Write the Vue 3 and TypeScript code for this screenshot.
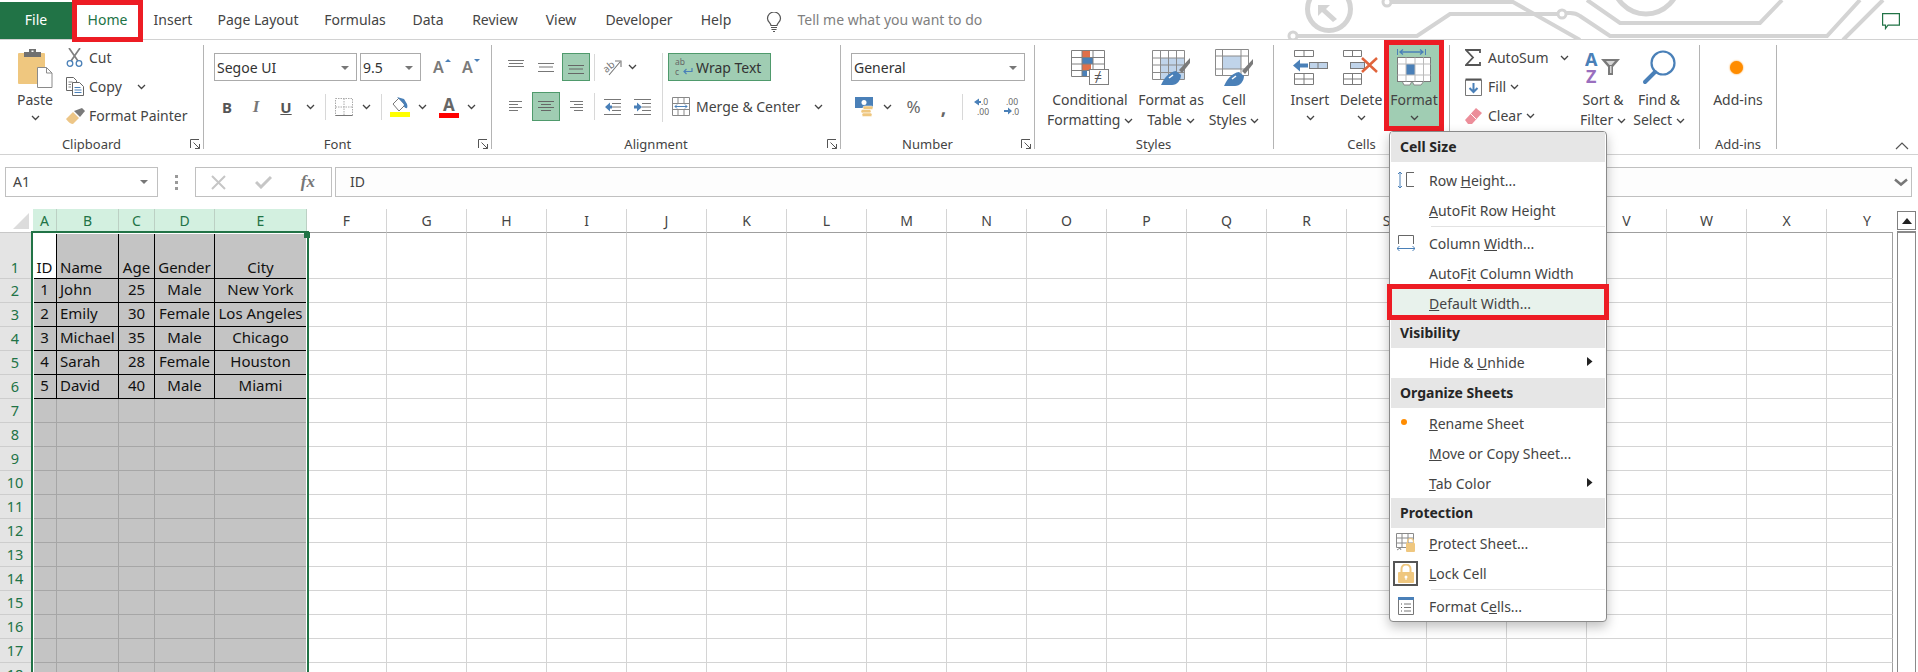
<script setup lang="ts">
const tabs = [
  { name: 'File', w: 72, cls: 'file' },
  { name: 'Home', w: 71, cls: 'home' },
  { name: 'Insert', w: 60, cls: '' },
  { name: 'Page Layout', w: 110, cls: '' },
  { name: 'Formulas', w: 84, cls: '' },
  { name: 'Data', w: 62, cls: '' },
  { name: 'Review', w: 72, cls: '' },
  { name: 'View', w: 60, cls: '' },
  { name: 'Developer', w: 96, cls: '' },
  { name: 'Help', w: 58, cls: '' },
]

const colNames = 'ABCDEFGHIJKLMNOPQRSTUVWXY'.split('')
const rowNums = Array.from({ length: 18 }, (_, i) => i + 1)
const data: string[][] = [
  ['ID', 'Name', 'Age', 'Gender', 'City'],
  ['1', 'John', '25', 'Male', 'New York'],
  ['2', 'Emily', '30', 'Female', 'Los Angeles'],
  ['3', 'Michael', '35', 'Male', 'Chicago'],
  ['4', 'Sarah', '28', 'Female', 'Houston'],
  ['5', 'David', '40', 'Male', 'Miami'],
]
const aligns = ['ctr', 'lft', 'ctr', 'ctr', 'ctr']

function cellText(r: number, c: number): string {
  return data[r - 1]?.[c] ?? ''
}
function cellClass(r: number, c: number): string[] {
  const out: string[] = []
  if (c < 5) {
    out.push('sel', aligns[c])
    if (r <= 6) out.push('tb')
    if (c === 4) out.push('last-sel')
    if (r === 1 && c === 0) out.push('a1')
  }
  if (r === 1) out.push('r1')
  if (c === 24) out.push('edge')
  return out
}

type Item = {
  kind: 'head' | 'item' | 'sep'
  pre?: string
  u?: string
  post?: string
  icon?: string
  arrow?: boolean
  cls?: string
}
const menu: Item[] = [
  { kind: 'head', pre: 'Cell Size' },
  { kind: 'item', pre: 'Row ', u: 'H', post: 'eight...', icon: 'rowh', cls: 'mt4' },
  { kind: 'item', u: 'A', post: 'utoFit Row Height' },
  { kind: 'sep' },
  { kind: 'item', pre: 'Column ', u: 'W', post: 'idth...', icon: 'colw', cls: 'mt2' },
  { kind: 'item', pre: 'AutoF', u: 'i', post: 't Column Width' },
  { kind: 'item', u: 'D', post: 'efault Width...', cls: 'boxed' },
  { kind: 'head', pre: 'Visibility', cls: 'short' },
  { kind: 'item', pre: 'Hide & ', u: 'U', post: 'nhide', arrow: true },
  { kind: 'head', pre: 'Organize Sheets' },
  { kind: 'item', u: 'R', post: 'ename Sheet', icon: 'dot', cls: 'mt1' },
  { kind: 'item', u: 'M', post: 'ove or Copy Sheet...' },
  { kind: 'item', u: 'T', post: 'ab Color', arrow: true, cls: 'mb-1' },
  { kind: 'head', pre: 'Protection' },
  { kind: 'item', u: 'P', post: 'rotect Sheet...', icon: 'prot', cls: 'mt1' },
  { kind: 'item', u: 'L', post: 'ock Cell', icon: 'lock' },
  { kind: 'sep' },
  { kind: 'item', pre: 'Format C', u: 'e', post: 'lls...', icon: 'fmt', cls: 'mt2' },
]
</script>

<template>
  <div class="root">
    <svg class="defs" aria-hidden="true">
      <symbol id="chev" viewBox="0 0 9 6"><path d="M1 1l3.5 3.5L8 1" fill="none" stroke="#444" stroke-width="1.3"/></symbol>
      <symbol id="launch" viewBox="0 0 10 10"><path d="M.5 9V.5H9M9.5 9.500L3.500 3.500M9.500 5v4.500H5" fill="none" stroke="#555" stroke-width="1"/></symbol>
      <symbol id="dd" viewBox="0 0 8 4"><path d="M0 0h8L4 4z" fill="#777"/></symbol>
      <symbol id="brush" viewBox="0 0 38 38">
        <path d="M38 10L27 22l3 3L38 15z" fill="#7a7a7a"/>
        <path d="M9 37c3-7 8-13 15-14l5 4c0 5-4 10-9 10z" fill="#4a80b8"/>
        <path d="M17 30l4-3" stroke="#fff" stroke-width="1.500"/>
      </symbol>
    </svg>

    <div class="tabbar">
      <svg class="circuit" width="620" height="40" viewBox="1280 0 620 40" fill="none" stroke="#d4d4d4" stroke-width="4">
        <circle cx="1329" cy="9" r="21.500" stroke-width="5"/>
        <path d="M1318 5h12l-4 4 11 10-4 3-11-10-4 4z" fill="#d4d4d4" stroke="none"/>
        <circle cx="1293" cy="36" r="4" stroke-width="3"/>
        <path d="M1297 36H1417L1450 14H1558"/>
        <circle cx="1562" cy="14" r="4" stroke-width="3"/>
        <path d="M1566 13h4q6 0 10 3l30 20H1827L1860 0"/>
        <circle cx="1387" cy="2" r="4" stroke-width="3"/>
        <path d="M1391 2H1513L1580 40"/>
        <path d="M1587 0L1620 23H1760L1782 0"/>
        <circle cx="1646" cy="-19" r="33" stroke-width="5"/>
        <path d="M1843 40L1883 0"/>
      </svg>
      <div v-for="t in tabs" :key="t.name" class="tab" :class="t.cls" :style="{ width: t.w + 'px' }">{{ t.name }}</div>
      <svg class="bulb" width="16" height="20" viewBox="0 0 16 20" fill="none" stroke="#555" stroke-width="1.200">
        <path d="M5 13.500C5 11 1.500 10 1.500 6.500a6.500 6.500 0 0 1 13 0C14.500 10 11 11 11 13.500z"/>
        <path d="M5 15.500h6M5.500 17.500h5M7 19.500h2"/>
      </svg>
      <div class="tell">Tell me what you want to do</div>
      <svg class="chat" width="18" height="17" viewBox="0 0 18 17" fill="none" stroke="#217346" stroke-width="1.200">
        <path d="M.6.600h16.800v11.500H6L3.500 15.500v-3.400H.6z"/>
      </svg>
    </div>

    <div class="ribbon">
      <!-- Clipboard -->
      <div class="group g-clip">
        <div class="gb">
          <div class="lg paste">
            <div class="lg-ic">
              <svg width="36" height="40" viewBox="0 0 36 40">
                <rect x="1" y="5" width="27" height="31" rx="1" fill="#efc77f"/>
                <rect x="7" y="4" width="17" height="5" fill="#707070"/>
                <rect x="12" y="1" width="7" height="4" fill="#707070"/>
                <rect x="14.500" y="2.500" width="2" height="1.500" fill="#fff"/>
                <path d="M20.500 19.500h9l5.500 5.500v14.500H20.500z" fill="#fff" stroke="#8a8a8a"/>
                <path d="M29.500 19.500v5.500h5.500" fill="none" stroke="#8a8a8a"/>
              </svg>
            </div>
            <div class="lb">Paste</div>
            <svg class="ch-row"><use href="#chev"/></svg>
          </div>
          <div class="smalls">
            <div class="sm">
              <span class="si"><svg width="17" height="19" viewBox="0 0 17 19" fill="none">
                <path d="M3 0l9 13M14 0L5 13" stroke="#7f7f7f" stroke-width="1.700"/>
                <circle cx="4" cy="15.500" r="2.800" stroke="#4a80b8" stroke-width="1.300"/>
                <circle cx="13" cy="15.500" r="2.800" stroke="#4a80b8" stroke-width="1.300"/>
              </svg></span>Cut
            </div>
            <div class="sm">
              <span class="si"><svg width="18" height="19" viewBox="0 0 18 19" fill="#fff">
                <path d="M.5.500h7l3 3v10H.5z" stroke="#666"/>
                <path d="M6.500 5.500h7l4 4v9h-11z" stroke="#666"/>
                <path d="M8.500 10.500h6M8.500 13h7M8.500 15.500h7" stroke="#4a80b8"/>
                <path d="M2.500 5h4M2.500 7.500h2.500M2.500 10h2.500" stroke="#888"/>
              </svg></span>Copy<svg class="ch ml-copy"><use href="#chev"/></svg>
            </div>
            <div class="sm">
              <span class="si"><svg width="19" height="16" viewBox="0 0 19 16">
                <path d="M0 11l7-7 6 6-6 6c-2 0-5-2-7-5z" fill="#edc687"/>
                <path d="M8 3l6 6 5-6-3-3z" fill="#7a7a7a"/>
              </svg></span>Format Painter
            </div>
          </div>
        </div>
        <div class="gl">Clipboard<svg class="launch"><use href="#launch"/></svg></div>
      </div>

      <!-- Font -->
      <div class="group g-font">
        <div class="gb col pad8">
          <div class="row1 pl10">
            <div class="combo w143">Segoe UI<svg class="dd"><use href="#dd"/></svg></div>
            <div class="combo w61 ml3">9.5<svg class="dd"><use href="#dd"/></svg></div>
            <span class="glyphA w-a1">A<svg class="tri" width="6" height="3" viewBox="0 0 6 3"><path d="M0 3L3 0l3 3z" fill="#4a80b8"/></svg></span>
            <span class="glyphA w-a2">A<svg class="tri" width="6" height="3" viewBox="0 0 6 3"><path d="M0 0h6L3 3z" fill="#4a80b8"/></svg></span>
          </div>
          <div class="row2 pl9">
            <span class="c w28 bold">B</span>
            <span class="c w30 ital">I</span>
            <span class="c w30 bold und">U</span>
            <span class="c w18"><svg class="ch"><use href="#chev"/></svg></span>
            <span class="c w12"><i class="vs"></i></span>
            <span class="c w26"><svg width="18" height="18" viewBox="0 0 18 18" fill="none" stroke="#aaa" stroke-dasharray="1.500 1">
              <path d="M.5.500h17v17H.5zM9 .5v17M.5 9h17"/><path d="M.5 17.500h17" stroke="#777" stroke-dasharray="none"/>
            </svg></span>
            <span class="c w18"><svg class="ch"><use href="#chev"/></svg></span>
            <span class="c w12"><i class="vs"></i></span>
            <span class="c w26"><svg width="20" height="22" viewBox="0 0 20 22">
              <path d="M3 8l6-6 6 7-6 6z" fill="#fff" stroke="#777"/>
              <path d="M7 1l7 2 3 5c1 3 0 5-1 4-1 0-3-2-2-4z" fill="#4a80b8"/>
              <rect y="16" width="20" height="5" fill="#ffff00"/>
            </svg></span>
            <span class="c w18"><svg class="ch"><use href="#chev"/></svg></span>
            <span class="c w36 acolor">A<i class="abar"></i></span>
            <span class="c w8"><svg class="ch"><use href="#chev"/></svg></span>
          </div>
        </div>
        <div class="gl">Font<svg class="launch"><use href="#launch"/></svg></div>
      </div>

      <!-- Alignment -->
      <div class="group g-align">
        <div class="gb pad8 al">
          <div class="al-left">
            <div class="row1 ar">
              <span class="ib"><svg width="18" height="16" viewBox="0 0 18 16" stroke="#777" fill="none"><path d="M1 1.500h16M2 4.500h14M1 7.500h16"/></svg></span>
              <span class="ib"><svg width="18" height="16" viewBox="0 0 18 16" stroke="#777" fill="none"><path d="M1 4.500h16M2 8h14M1 12.500h16"/></svg></span>
              <span class="ib on"><svg width="18" height="16" viewBox="0 0 18 16" stroke="#666" fill="none"><path d="M1 6.500h16M2 10h14M1 14.500h16"/></svg></span>
              <span class="vsw"><i class="vs tall"></i></span>
              <span class="ib2 orient">
                <svg width="20" height="20" viewBox="0 0 20 20"><text x="0" y="13" transform="rotate(-40 6 10)" font-size="10" font-family="Noto Sans, sans-serif" fill="#777">ab</text><path d="M6 18L17 5M12 4h6v6" fill="none" stroke="#777" stroke-width="1.100"/></svg>
              </span>
              <span class="ib2 chv"><svg class="ch"><use href="#chev"/></svg></span>
            </div>
            <div class="row2 ar">
              <span class="ib"><svg width="16" height="14" viewBox="0 0 16 14" stroke="#777" fill="none"><path d="M1 1.500h13M1 4.500h9M1 7.500h13M1 10.500h9"/></svg></span>
              <span class="ib on"><svg width="18" height="14" viewBox="0 0 18 14" stroke="#666" fill="none"><path d="M1 1.500h16M4 4.500h10M1 7.500h16M4 10.500h10"/></svg></span>
              <span class="ib"><svg width="16" height="14" viewBox="0 0 16 14" stroke="#777" fill="none"><path d="M2 1.500h13M6 4.500h9M2 7.500h13M6 10.500h9"/></svg></span>
              <span class="vsw"><i class="vs tall"></i></span>
              <span class="ib2"><svg width="18" height="16" viewBox="0 0 18 16" fill="none">
                <path d="M0 .5h17M8 4.500h9M8 8h9M8 11.500h9M0 15.500h17" stroke="#777"/><path d="M6 3.500L1 8l5 4.500V9.500h2v-3H6z" fill="#4a80b8"/>
              </svg></span>
              <span class="ib2"><svg width="18" height="16" viewBox="0 0 18 16" fill="none">
                <path d="M0 .5h17M8 4.500h9M8 8h9M8 11.500h9M0 15.500h17" stroke="#777"/><path d="M3 3.500L8 8l-5 4.500V9.500H0v-3h3z" fill="#4a80b8"/>
              </svg></span>
            </div>
          </div>
          <i class="vs long"></i>
          <div class="al-right">
            <div class="row1">
              <div class="wrap">
                <svg width="20" height="20" viewBox="0 0 20 20"><text x="1" y="8" font-size="8.500" font-family="Noto Sans, sans-serif" fill="#666">ab</text><text x="1" y="18" font-size="8.500" font-family="Noto Sans, sans-serif" fill="#666">c</text><path d="M18 11v3.500H10M12.500 12L10 14.500l2.500 2.500" fill="none" stroke="#4a80b8" stroke-width="1.200"/></svg>
                <span>Wrap Text</span>
              </div>
            </div>
            <div class="row2 merge">
              <svg width="18" height="19" viewBox="0 0 18 19" fill="none" stroke="#888">
                <path d="M.5.500h17v18H.5zM.5 6.500h17M.5 12.500h17M6 .5v6M12 .5v6M6 12.500v6M12 12.500v6"/>
                <rect x="1" y="7" width="16" height="5" fill="#fff" stroke="none"/>
                <path d="M3 9.500h12M5 7.500l-2 2 2 2M13 7.500l2 2-2 2" stroke="#4a80b8"/>
              </svg>
              <span class="merge-t">Merge &amp; Center</span>
              <svg class="ch ml-merge"><use href="#chev"/></svg>
            </div>
          </div>
        </div>
        <div class="gl">Alignment<svg class="launch"><use href="#launch"/></svg></div>
      </div>

      <!-- Number -->
      <div class="group g-num">
        <div class="gb col pad8">
          <div class="row1 pl10"><div class="combo w174">General<svg class="dd"><use href="#dd"/></svg></div></div>
          <div class="row2 pl10">
            <span class="c w26"><svg width="19" height="20" viewBox="0 0 19 20">
              <rect x="0" y="0" width="18" height="11" fill="#4a80b8"/>
              <circle cx="9" cy="5.500" r="2.500" fill="#fff"/>
              <rect x="8" y="9" width="10" height="3.500" rx="1.500" fill="#efc77f" stroke="#fff" stroke-width=".5"/>
              <rect x="6" y="12.500" width="10" height="3.500" rx="1.500" fill="#efc77f" stroke="#fff" stroke-width=".5"/>
              <rect x="7" y="16" width="10" height="3.500" rx="1.500" fill="#efc77f" stroke="#fff" stroke-width=".5"/>
            </svg></span>
            <span class="c w21"><svg class="ch"><use href="#chev"/></svg></span>
            <span class="c w31 pct">%</span>
            <span class="c w29 comma">,</span>
            <span class="c w9"><i class="vs"></i></span>
            <span class="c w30"><svg width="20" height="19" viewBox="0 0 20 19"><text x="9" y="8" font-size="8.500" font-family="Noto Sans, sans-serif" fill="#666">.0</text><text x="5" y="17.500" font-size="8.500" font-family="Noto Sans, sans-serif" fill="#666">.00</text><path d="M7 1.500L2 5l5 3.500V6h2V4H7z" fill="#4a80b8"/></svg></span>
            <span class="c w28"><svg width="20" height="19" viewBox="0 0 20 19"><text x="5" y="8" font-size="8.500" font-family="Noto Sans, sans-serif" fill="#666">.00</text><text x="11" y="17.500" font-size="8.500" font-family="Noto Sans, sans-serif" fill="#666">.0</text><path d="M7 10.500l4 3.500-4 3.500V15H3v-2h4z" fill="#4a80b8"/></svg></span>
          </div>
        </div>
        <div class="gl">Number<svg class="launch"><use href="#launch"/></svg></div>
      </div>

      <!-- Styles -->
      <div class="group g-styles">
        <div class="gb sty">
          <div class="lg w92">
            <div class="lg-ic">
              <svg width="38" height="35" viewBox="0 0 38 35" fill="none">
                <path d="M11 0h8v7h-8z" fill="#e0704a"/><path d="M11 7h11v7H11z" fill="#4a80b8"/><path d="M11 14h9v7h-9z" fill="#e0704a"/><path d="M11 21h5v6h-5z" fill="#4a80b8"/>
                <path d="M.5.500h33v26H.5zM.5 7.500h33M.5 14h33M.5 20.500h33M11 .5v26M22 .5v26" stroke="#7f7f7f"/>
                <rect x="18.500" y="19.500" width="19" height="15" fill="#fff" stroke="#7f7f7f"/>
                <text x="23" y="32" font-size="14" font-family="Noto Sans, sans-serif" fill="#555">≠</text>
              </svg>
            </div>
            <div class="lb">Conditional</div>
            <div class="lb">Formatting <svg class="ch"><use href="#chev"/></svg></div>
          </div>
          <div class="lg w70">
            <div class="lg-ic">
              <svg width="38" height="36" viewBox="0 0 38 36" fill="none">
                <rect x="8" y="8" width="24" height="22" fill="#c0d4ea"/>
                <path d="M.5.500h32v29H.5zM.5 8h32M.5 15h32M.5 22.500h32M8.500 .5v29M16.500 .5v29M24.500 .5v29" stroke="#8a8a8a"/>
                <use href="#brush" x="0" y="-2" width="38" height="38"/>
              </svg>
            </div>
            <div class="lb">Format as</div>
            <div class="lb">Table <svg class="ch"><use href="#chev"/></svg></div>
          </div>
          <div class="lg w56">
            <div class="lg-ic">
              <svg width="38" height="38" viewBox="0 0 38 38" fill="none">
                <rect x="7" y="7" width="19" height="13" fill="#c0d4ea"/>
                <path d="M.5.500h33v26H.5zM.5 7h33M.5 20h33M7.500 .5v26M26 .5v26" stroke="#8a8a8a"/>
                <use href="#brush" x="0" y="0" width="38" height="38"/>
              </svg>
            </div>
            <div class="lb">Cell</div>
            <div class="lb">Styles <svg class="ch"><use href="#chev"/></svg></div>
          </div>
        </div>
        <div class="gl sty-l">Styles</div>
      </div>

      <!-- Cells -->
      <div class="group g-cells">
        <div class="gb cel">
          <div class="lg w56">
            <div class="lg-ic">
              <svg width="36" height="35" viewBox="0 0 36 35" fill="none">
                <path d="M2.500.500h19v6h-19zM12 .5v6M2.500 23.500h19v11h-19zM12 23.500v11M2.500 29h19" stroke="#7a7a7a"/>
                <rect x="17.500" y="12.500" width="18" height="6" fill="#c0d4ea" stroke="#7a7a7a"/><path d="M26 12.500v6" stroke="#7a7a7a"/>
                <path d="M8 9.500L1 15.500l7 6v-4h8v-4H8z" fill="#4a80b8"/>
              </svg>
            </div>
            <div class="lb">Insert</div>
            <svg class="ch-row"><use href="#chev"/></svg>
          </div>
          <div class="lg w46">
            <div class="lg-ic">
              <svg width="36" height="35" viewBox="0 0 36 35" fill="none">
                <path d="M.5.500h18v6H.5zM9.500 .5v6M.5 23.500h18v11H.5zM9.500 23.500v11M.5 29h18" stroke="#7a7a7a"/>
                <rect x="7.500" y="12.500" width="14" height="6" fill="#c0d4ea" stroke="#7a7a7a"/>
                <path d="M19 8l15 14M34 8L19 22" stroke="#e0643c" stroke-width="2.500"/>
              </svg>
            </div>
            <div class="lb">Delete</div>
            <svg class="ch-row"><use href="#chev"/></svg>
          </div>
          <div class="lg fmtbtn">
            <div class="lg-ic">
              <svg width="34" height="38" viewBox="0 0 34 38" fill="none">
                <path d="M.5 0v6M28.500 0v6" stroke="#4a80b8"/>
                <path d="M3 3h23M6 .5L3 3l3 2.500M23 .5L26 3l-3 2.500" stroke="#4a80b8" stroke-width="1.300"/>
                <path d="M5 32l2 4h6l2-4zM15 32l2 4h7l3-4z" fill="#fff" stroke="#8a8a8a"/>
                <rect x=".5" y="8.500" width="33" height="24" fill="#fff" stroke="#7a7a7a"/>
                <rect x="9" y="15" width="9" height="11" fill="#4a80b8"/>
                <path d="M9 8.500v24M18 8.500v24M26.500 8.500v24M.5 15h33M.5 26h33" stroke="#bbb"/>
              </svg>
            </div>
            <div class="lb">Format</div>
            <svg class="ch-row"><use href="#chev"/></svg>
          </div>
        </div>
        <div class="gl nor">Cells</div>
      </div>

      <!-- Editing -->
      <div class="group g-edit">
        <div class="gb edit">
          <div class="smalls w110">
            <div class="sm">
              <span class="si"><svg width="16" height="17" viewBox="0 0 16 17"><path d="M15 4V1H1l7 7.500L1 16h14v-3" fill="none" stroke="#555" stroke-width="1.800"/></svg></span>AutoSum<svg class="ch ml-auto2"><use href="#chev"/></svg>
            </div>
            <div class="sm">
              <span class="si"><svg width="17" height="18" viewBox="0 0 17 18" fill="none"><path d="M.5 2h16v15.500H.5z" stroke="#777"/><path d="M.5 1.500h16" stroke="#555" stroke-width="2"/><path d="M8.500 5v8M4.500 10l4 4 4-4" stroke="#4a80b8" stroke-width="2"/></svg></span>Fill<svg class="ch ml4"><use href="#chev"/></svg>
            </div>
            <div class="sm">
              <span class="si"><svg width="17" height="16" viewBox="0 0 17 16"><path d="M11 0l6 5-10 11H3l-3-4z" fill="#ec8e9a"/><path d="M5 5l6 6" stroke="#fff"/></svg></span>Clear<svg class="ch ml4"><use href="#chev"/></svg>
            </div>
          </div>
          <div class="lg w56">
            <div class="lg-ic">
              <svg width="36" height="34" viewBox="0 0 36 34">
                <text x="0" y="15" font-size="18" font-weight="700" font-family="Noto Sans, sans-serif" fill="#4a80b8">A</text>
                <text x="1" y="32" font-size="18" font-weight="700" font-family="Noto Sans, sans-serif" fill="#9a6fbe">Z</text>
                <path d="M16 8h19l-7 8v8l-5 0v-8z" fill="#7a7a7a"/>
                <path d="M21 10h9l-3.500 4h-2z M25 15v7h1.500v-7z" fill="#fff" opacity=".7"/>
              </svg>
            </div>
            <div class="lb">Sort &amp;</div>
            <div class="lb">Filter <svg class="ch"><use href="#chev"/></svg></div>
          </div>
          <div class="lg w56">
            <div class="lg-ic">
              <svg width="36" height="36" viewBox="0 0 36 36" fill="none">
                <circle cx="22" cy="13" r="11.500" stroke="#4a80b8" stroke-width="2.200"/>
                <path d="M14 22L4 32" stroke="#4a80b8" stroke-width="4" stroke-linecap="round"/>
              </svg>
            </div>
            <div class="lb">Find &amp;</div>
            <div class="lb">Select <svg class="ch"><use href="#chev"/></svg></div>
          </div>
        </div>
        <div class="gl nor">Editing</div>
      </div>

      <!-- Add-ins -->
      <div class="group g-add">
        <div class="gb">
          <div class="lg full">
            <div class="lg-ic"><i class="addin"></i></div>
            <div class="lb">Add-ins</div>
          </div>
        </div>
        <div class="gl nor">Add-ins</div>
      </div>

      <svg class="collapse" width="14" height="8" viewBox="0 0 14 8"><path d="M1 7l6-6 6 6" fill="none" stroke="#555" stroke-width="1.200"/></svg>
    </div>

    <div class="fbar">
      <div class="namebox">A1<svg class="dd"><use href="#dd"/></svg></div>
      <div class="dots"><i></i><i></i><i></i></div>
      <div class="fbtns">
        <svg width="15" height="15" viewBox="0 0 15 15"><path d="M1 1l13 13M14 1L1 14" stroke="#c6c6c6" stroke-width="2"/></svg>
        <svg width="17" height="14" viewBox="0 0 17 14"><path d="M1 7l5 5L16 2" fill="none" stroke="#c6c6c6" stroke-width="3"/></svg>
        <span class="fx">fx</span>
      </div>
      <div class="finput">ID<svg class="fch" width="14" height="9" viewBox="0 0 14 9"><path d="M1 1.500l6 5 6-5" fill="none" stroke="#777" stroke-width="2.500"/></svg></div>
    </div>

    <div class="sheetwrap">
      <div class="sheet">
        <div class="corner"><svg width="16" height="16" viewBox="0 0 16 16"><path d="M16 0v16H0z" fill="#dcdcdc"/></svg></div>
        <div v-for="(n, c) in colNames" :key="n" class="ch-cell" :class="{ 'ch-sel': c < 5, 'ch-edge': c === 24 }">{{ n }}</div>
        <template v-for="r in rowNums" :key="r">
          <div class="rh" :class="{ r1: r === 1 }">{{ r }}</div>
          <div v-for="(n, c) in colNames" :key="n + r" class="cell" :class="cellClass(r, c)">{{ cellText(r, c) }}</div>
        </template>
        <div class="selbox"><i class="handle"></i></div>
      </div>
      <div class="vscroll">
        <div class="vbtn"><svg width="10" height="6" viewBox="0 0 10 6"><path d="M5 0l5 6H0z" fill="#222"/></svg></div>
        <div class="vtrack"></div>
      </div>
    </div>

    <div class="menu">
      <template v-for="(m, i) in menu" :key="i">
        <div v-if="m.kind === 'head'" class="m-head" :class="m.cls">{{ m.pre }}</div>
        <div v-else-if="m.kind === 'sep'" class="m-sep"></div>
        <div v-else class="m-item" :class="m.cls">
          <span class="m-ic">
            <svg v-if="m.icon === 'rowh'" width="18" height="18" viewBox="0 0 18 18" fill="none">
              <path d="M3 1v16M1 3l2-2 2 2M1 15l2 2 2-2" stroke="#4a80b8"/><path d="M17 1.500H9.500v14H17" stroke="#666"/>
            </svg>
            <svg v-else-if="m.icon === 'colw'" width="18" height="16" viewBox="0 0 18 16" fill="none">
              <path d="M1.500 9V.5h15V9" stroke="#666"/><path d="M0 13.500h18M2.500 11L0 13.500 2.500 16M15.500 11l2.500 2.500-2.500 2.500" stroke="#4a80b8"/>
            </svg>
            <i v-else-if="m.icon === 'dot'" class="m-dot"></i>
            <svg v-else-if="m.icon === 'prot'" width="19" height="20" viewBox="0 0 19 20" fill="none">
              <path d="M.5.500h17v14H.5zM.5 5h17M.5 10h17M6 .5v14M12 .5v14" stroke="#8a8a8a"/>
              <rect x="10" y="10" width="9" height="9" rx="1" fill="#efc77f"/><path d="M11.500 10V8.500a3 3 0 0 1 6 0V10" stroke="#efc77f" stroke-width="1.200"/>
              <path d="M1 17l3-2 1 2" stroke="#888"/>
            </svg>
            <span v-else-if="m.icon === 'lock'" class="m-lock">
              <svg width="16" height="19" viewBox="0 0 16 19" fill="none">
                <path d="M3.500 8V5a4.500 4.500 0 0 1 9 0v3" stroke="#efc77f" stroke-width="2"/>
                <rect y="8" width="16" height="11" rx="1" fill="#efc77f"/><circle cx="8" cy="13" r="1.500" fill="#fff"/><path d="M8 13v3" stroke="#fff"/>
              </svg>
            </span>
            <svg v-else-if="m.icon === 'fmt'" width="16" height="18" viewBox="0 0 16 18" fill="none">
              <path d="M.5.500h15v17H.5z" stroke="#777"/><rect width="16" height="3" fill="#4a80b8"/>
              <path d="M6 7h7M6 10.500h7M6 14h7" stroke="#777"/><path d="M3 7h1M3 10.500h1M3 14h1" stroke="#555"/>
            </svg>
          </span>
          <span class="m-t">{{ m.pre }}<u v-if="m.u">{{ m.u }}</u>{{ m.post }}</span>
          <svg v-if="m.arrow" class="m-arrow" width="6" height="9" viewBox="0 0 6 9"><path d="M0 0l5.500 4.500L0 9z" fill="#222"/></svg>
        </div>
      </template>
    </div>
  </div>
</template>

<style>
html, body { margin: 0; padding: 0; background: #fff; overflow: hidden; }
</style>

<style scoped>
.root {
  position: relative;
  width: 1918px;
  height: 672px;
  overflow: hidden;
  background: #fff;
  font-family: "Noto Sans", "Open Sans", sans-serif;
  font-size: 14px;
  color: #444;
}
.defs { position: absolute; width: 0; height: 0; }
i { display: block; font-style: normal; }

/* tab bar */
.tabbar {
  position: relative;
  height: 39px;
  border-bottom: 1px solid #d2d2d2;
  display: flex;
  align-items: flex-start;
}
.circuit { position: absolute; left: 1280px; top: 0; }
.tab {
  position: relative;
  height: 39px;
  line-height: 40px;
  text-align: center;
  box-sizing: border-box;
  color: #444;
}
.tab.file { margin-top: 2px; height: 37px; line-height: 36px; background: #217346; color: #fff; }
.tab.home {
  height: 42px;
  line-height: 30px;
  border: 5px solid #ed1c24;
  color: #217346;
  z-index: 2;
}
.bulb { position: relative; margin: 12px 0 0 21px; }
.tell { position: relative; margin-left: 15.500px; line-height: 40px; color: #7f7f7f; }
.chat { position: absolute; left: 1882px; top: 13px; }

/* ribbon */
.ribbon {
  position: relative;
  height: 109px;
  padding-top: 5px;
  border-bottom: 1px solid #d2d2d2;
  display: flex;
}
.group {
  position: relative;
  display: flex;
  flex-direction: column;
  height: 104px;
  box-sizing: border-box;
  border-right: 1px solid #b4b4b4;
  flex: none;
}
.g-clip { width: 204px; }
.g-font { width: 288px; }
.g-align { width: 349px; }
.g-num { width: 194px; }
.g-styles { width: 239px; }
.g-cells { width: 176px; }
.g-edit { width: 250px; }
.g-add { width: 77px; }
.gb { flex: 1; display: flex; min-height: 0; }
.col { flex-direction: column; }
.pad8 { padding-top: 8px; }
.gl {
  position: relative;
  height: 18px;
  line-height: 18px;
  margin-bottom: -4px;
  font-size: 13px;
  text-align: center;
  padding-right: 20px;
  white-space: nowrap;
}
.gl.nor { padding-right: 0; }
.gl.sty-l { padding: 0 10px 0 9px; }
.launch { position: absolute; right: 3px; top: 4px; width: 10px; height: 10px; }

.lg {
  display: flex;
  flex-direction: column;
  align-items: center;
  flex: none;
  white-space: nowrap;
}
.lg-ic { height: 45px; display: flex; align-items: center; justify-content: center; }
.lb { line-height: 20px; height: 20px; }
.lb .ch { margin-left: 0; vertical-align: 1px; }
.ch { width: 9px; height: 6px; flex: none; display: inline-block; }
.ch-row { width: 9px; height: 6px; margin-top: 5px; display: block; }
.paste { width: 62px; margin-left: 4px; }
.w92 { width: 92px; }
.w70 { width: 70px; }
.w56 { width: 56px; }
.w46 { width: 46px; }
.full { width: 76px; }
.smalls { margin-top: -2px; }
.w110 { width: 110px; }
.sm { height: 29px; display: flex; align-items: center; white-space: nowrap; }
.si { width: 23px; flex: none; display: flex; align-items: center; }
.ml-copy { margin-left: 15px; }
.ml-auto2 { margin-left: 11px; }
.ml-merge { margin-left: 14px; }
.ml3 { margin-left: 3px; }
.ml4 { margin-left: 4px; }

.row1 { height: 28px; display: flex; align-items: center; }
.row2 { height: 29px; margin-top: 11px; display: flex; align-items: center; }
.pl10 { padding-left: 10px; }
.pl9 { padding-left: 9px; }
.combo {
  position: relative;
  height: 28px;
  line-height: 27px;
  box-sizing: border-box;
  border: 1px solid #ababab;
  padding-left: 2px;
  color: #333;
  background: #fff;
}
.w143 { width: 143px; }
.w61 { width: 61px; }
.w174 { width: 174px; }
.dd { position: absolute; right: 7px; top: 12px; width: 8px; height: 4px; }
.glyphA {
  position: relative;
  display: block;
  font-size: 16px;
  font-weight: 600;
  color: #7a7a7a;
  width: 18px;
  text-align: left;
}
.w-a1 { margin-left: 12px; }
.w-a2 { margin-left: 11px; }
.tri { position: absolute; right: 0; top: 3px; }
.c { display: flex; align-items: center; justify-content: center; flex: none; height: 29px; }
.w8 { width: 8px; }
.w9 { width: 9px; }
.w12 { width: 12px; }
.w18 { width: 18px; }
.w21 { width: 21px; }
.w26 { width: 26px; }
.w28 { width: 28px; }
.w29 { width: 29px; }
.w30 { width: 30px; }
.w31 { width: 31px; }
.w36 { width: 36px; }
.bold { font-weight: 700; font-size: 15px; color: #555; }
.ital { font-family: "Liberation Serif", serif; font-style: italic; font-weight: 700; font-size: 17px; color: #777; }
.und { text-decoration: underline; }
.vs { width: 1px; height: 26px; background: #d8d8d8; }
.vs.tall { height: 27px; }
.acolor { position: relative; flex-direction: column; font-weight: 700; font-size: 17px; color: #666; line-height: 17px; }
.abar { width: 20px; height: 5px; background: #ff0000; }

/* alignment */
.al { padding-left: 9px; }
.al-left { width: 157px; }
.ar { width: 157px; }
.ib {
  width: 28px;
  height: 100%;
  margin: 0 1px;
  box-sizing: border-box;
  display: flex;
  align-items: center;
  justify-content: center;
  flex: none;
}
.ib.on { background: #a0cdb3; border: 1px solid #4f9a6c; }
.vsw { width: 7px; display: flex; justify-content: center; flex: none; }
.ib2 { width: 30px; flex: none; display: flex; justify-content: center; align-items: center; }
.chv { justify-content: flex-start; }
.long { height: 69px; margin-left: 4px; flex: none; }
.al-right { margin-left: 5px; }
.wrap {
  width: 103px;
  height: 28px;
  box-sizing: border-box;
  border: 1px solid #4f9a6c;
  background: #a0cdb3;
  display: flex;
  align-items: center;
  padding-left: 5px;
  gap: 2px;
  color: #333;
  white-space: nowrap;
}
.merge { padding-left: 4px; white-space: nowrap; }
.merge-t { margin-left: 6px; }
.pct { font-size: 17px; color: #666; }
.comma { font-size: 19px; font-weight: 700; color: #666; }

/* styles & cells */
.sty { padding-left: 9px; }
.cel { padding-left: 8px; }
.fmtbtn {
  width: 60px;
  height: 91px;
  margin-top: -5px;
  box-sizing: border-box;
  border: 5px solid #ed1c24;
  background: #a0cdb3;
  position: relative;
  z-index: 2;
}
.edit { padding-left: 15px; }
.addin {
  width: 13px;
  height: 13px;
  margin-right: 4px;
  border-radius: 50%;
  background: #ff8c00;
  box-shadow: 0 0 2px #ff8c00;
}
.collapse { position: absolute; left: 1895px; top: 102px; }

/* formula bar */
.fbar {
  display: flex;
  height: 30px;
  padding: 12px 0;
  align-items: stretch;
  background: #fff;
}
.namebox {
  position: relative;
  margin-left: 5px;
  width: 153px;
  box-sizing: border-box;
  border: 1px solid #c0c0c0;
  line-height: 28px;
  padding-left: 7px;
  color: #444;
}
.namebox .dd { right: 9px; top: 12px; }
.dots { width: 37px; display: flex; flex-direction: column; align-items: center; justify-content: center; gap: 3px; }
.dots i { width: 3px; height: 3px; background: #9a9a9a; }
.fbtns {
  width: 137px;
  box-sizing: border-box;
  border: 1px solid #c0c0c0;
  display: flex;
  align-items: center;
  justify-content: space-between;
  padding: 0 16px 0 15px;
}
.fx { font-family: "Liberation Serif", serif; font-style: italic; font-weight: 700; font-size: 17px; color: #777; }
.finput {
  position: relative;
  margin-left: 3px;
  width: 1577px;
  box-sizing: border-box;
  border: 1px solid #c0c0c0;
  line-height: 28px;
  padding-left: 14px;
  background: #fdfdfd;
}
.fch { position: absolute; right: 3px; top: 10px; }

/* sheet */
.sheetwrap { display: flex; align-items: flex-start; }
.sheet {
  position: relative;
  display: grid;
  grid-template-columns: 33px 24px 62px 36px 60px 92px repeat(19, 80px) 66px;
  grid-template-rows: 24px 46px repeat(17, 24px);
  width: 1893px;
  flex: none;
  color: #000;
}
.corner { display: flex; justify-content: flex-end; align-items: center; padding-right: 4px; box-sizing: border-box; border-bottom: 1px solid #c8c8c8; }
.ch-cell {
  box-sizing: border-box;
  border-right: 1px solid #d4d4d4;
  border-bottom: 1px solid #9f9f9f;
  text-align: center;
  line-height: 24px;
  color: #444;
}
.ch-cell.ch-edge { padding-left: 14px; border-right: none; }
.ch-cell.ch-sel { background: #d3f0e0; color: #217346; border-right-color: #bcd0c4; }
.rh {
  box-sizing: border-box;
  background: #e4e4e4;
  border-bottom: 1px solid #cdcdcd;
  color: #217346;
  text-align: center;
  line-height: 22px;
  padding-right: 3px;
  font-size: 14.500px;
}
.rh.r1 { padding-top: 23px; }
.cell {
  box-sizing: border-box;
  border-right: 1px solid #d4d4d4;
  border-bottom: 1px solid #d4d4d4;
  line-height: 21px;
  font-size: 15px;
  color: #111;
  white-space: nowrap;
  overflow: hidden;
}
.cell.r1 { padding-top: 23px; line-height: 22px; }
.cell.edge { border-right-color: #a0a0a0; }
.cell.sel { background: #c4c4c4; border-right-color: #a6a6a6; border-bottom-color: #a6a6a6; }
.cell.tb { border-right-color: #000; border-bottom-color: #000; }
.cell.last-sel { border-right-color: #fff; }
.cell.a1 { background: #fff; }
.lft { text-align: left; padding-left: 3px; }
.ctr { text-align: center; }
.selbox {
  position: absolute;
  left: 31px;
  top: 22px;
  width: 278px;
  height: 480px;
  box-sizing: border-box;
  border: 2px solid #217346;
  box-shadow: inset 0 0 0 1px #fff;
  pointer-events: none;
}
.handle {
  position: absolute;
  right: -3px;
  top: -1px;
  width: 6px;
  height: 6px;
  background: #217346;
}
.vscroll { margin: 2px 0 0 4px; width: 19px; flex: none; }
.vbtn {
  height: 19px;
  box-sizing: border-box;
  border: 1px solid #7f7f7f;
  display: flex;
  align-items: center;
  justify-content: center;
}
.vtrack { height: 460px; margin-top: 1px; box-sizing: border-box; border: 1px solid #8a8a8a; border-top-width: 2px; }

/* menu */
.menu {
  position: absolute;
  left: 1389px;
  top: 131px;
  width: 218px;
  height: 491px;
  box-sizing: border-box;
  background: #fff;
  border: 1px solid #8a8a8a;
  border-radius: 4px;
  box-shadow: 0 5px 12px rgba(0, 0, 0, 0.25);
  display: flex;
  flex-direction: column;
  z-index: 5;
}
.m-head {
  flex: none;
  height: 30px;
  line-height: 30px;
  margin: 0 1px;
  padding-left: 9px;
  background: #e6e6e6;
  font-weight: 700;
  color: #262626;
}
.m-head.short { height: 28px; line-height: 26px; }
.m-sep { flex: none; height: 1px; margin: 0 1px 0 41px; background: #e2e2e2; }
.m-item {
  position: relative;
  flex: none;
  height: 30px;
  padding-bottom: 2px;
  box-sizing: border-box;
  display: flex;
  align-items: center;
  color: #444;
  white-space: nowrap;
}
.m-ic { width: 39px; flex: none; display: flex; justify-content: center; align-items: center; padding-right: 8px; box-sizing: border-box; }
.m-t { position: relative; }
.mt4 { margin-top: 4px; }
.mt2 { margin-top: 2px; }
.mt1 { margin-top: 1px; }
.mb-1 { margin-bottom: -1px; }
.m-item.boxed {
  height: 36px;
  margin: -5px -3px 0 -3px;
  padding: 3px 0 0 3px;
  box-sizing: border-box;
  border: 5px solid #ed1c24;
  background: #e8f2ec;
  z-index: 2;
}
.m-item.boxed .m-ic { width: 34px; }
.m-arrow { position: absolute; right: 13px; top: 9px; }
.m-dot { width: 6px; height: 6px; border-radius: 50%; background: #ff8c00; margin: -3px 0 0 -4px; }
.m-lock {
  width: 25px;
  height: 25px;
  box-sizing: border-box;
  border: 2px solid #555;
  background: #fff;
  display: flex;
  align-items: center;
  justify-content: center;
}
</style>
